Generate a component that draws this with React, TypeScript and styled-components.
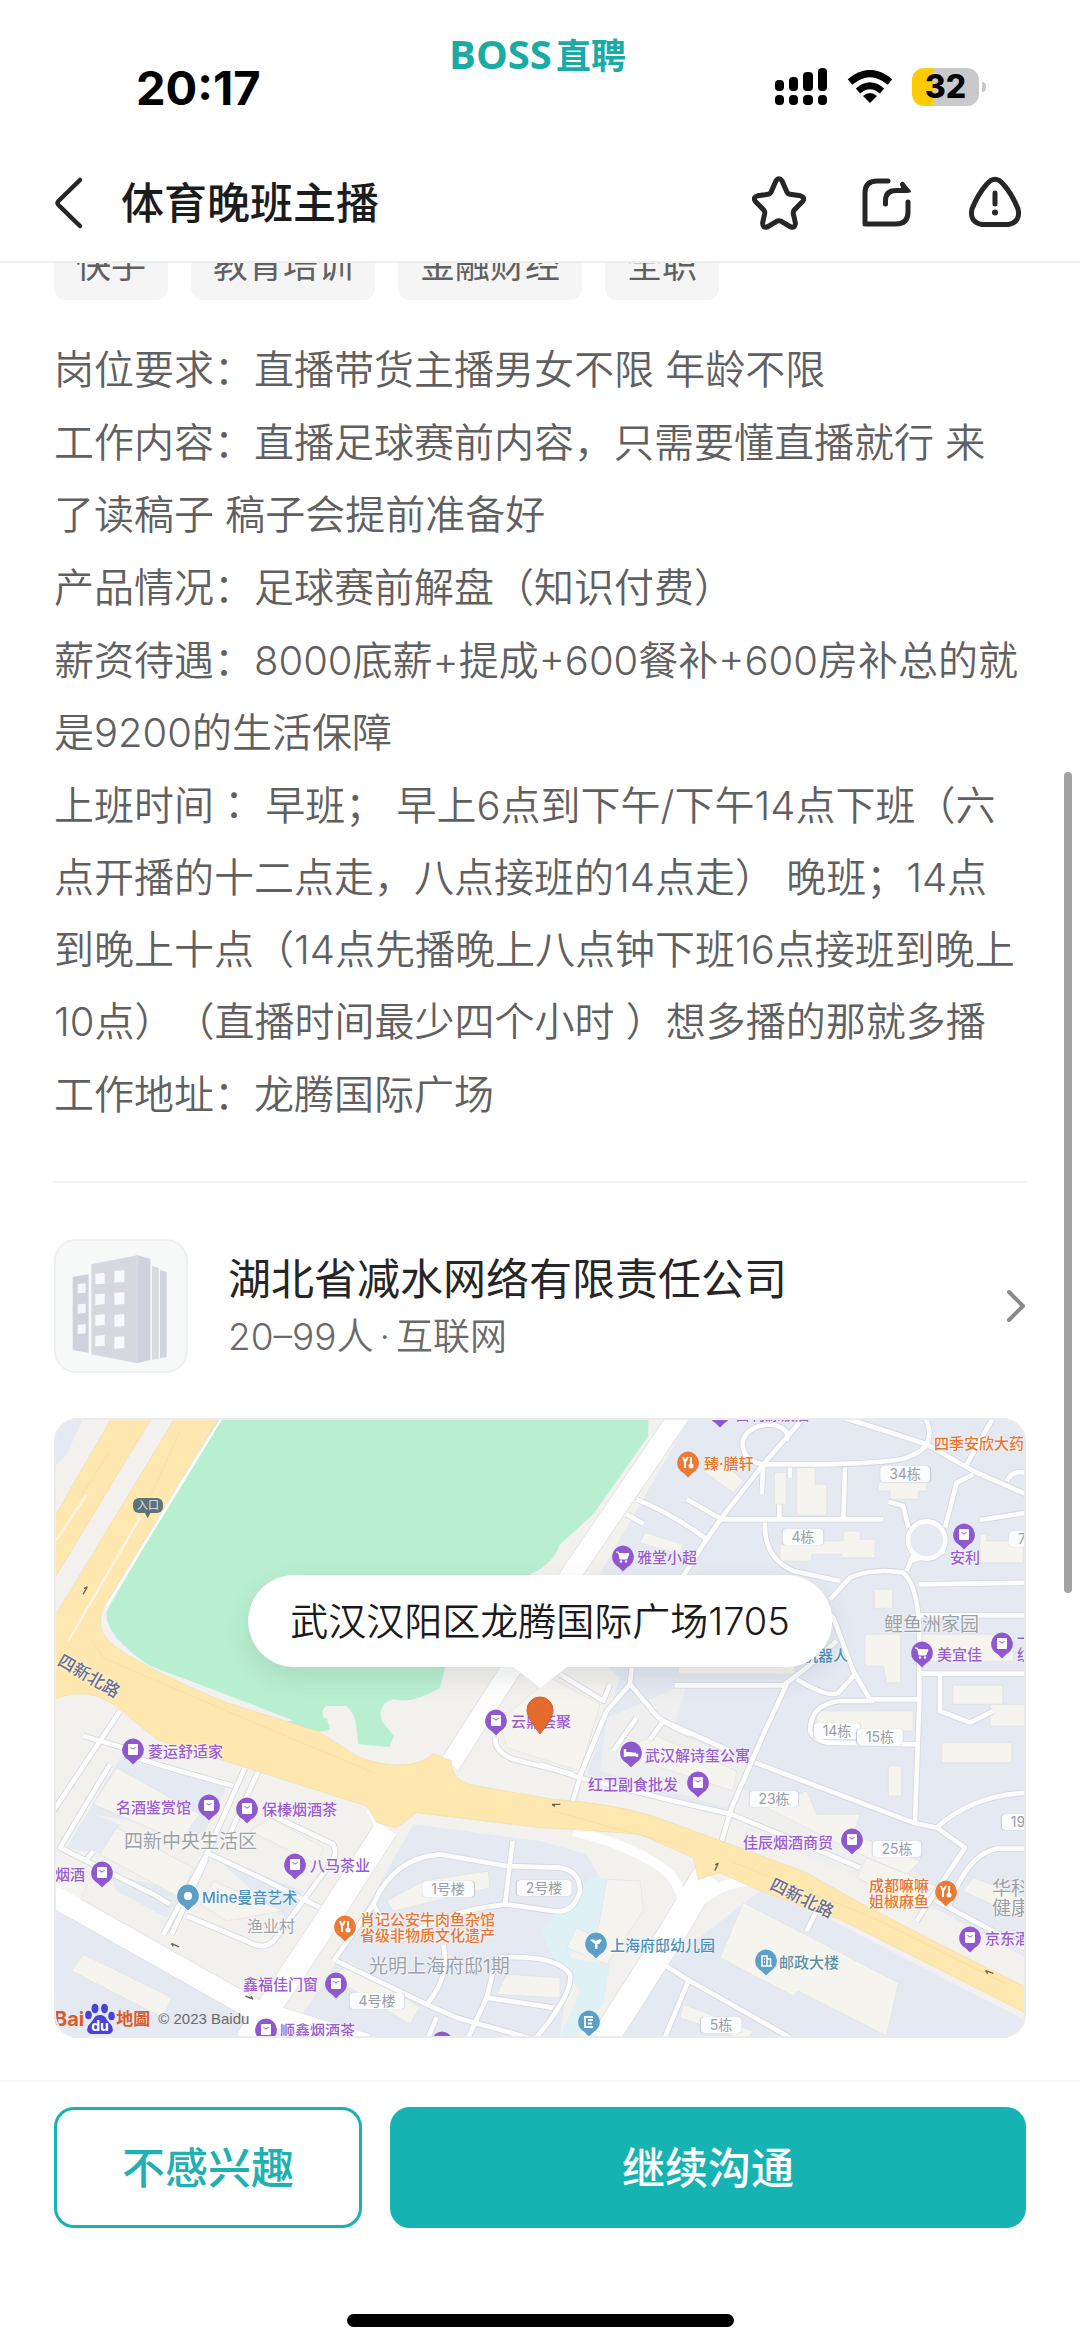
import React from "react";
import styled, { createGlobalStyle } from "styled-components";

const teal = "#17b3b3";
const ink = "#262626";
const body = "#606060";

const GlobalStyle = createGlobalStyle`
  body {
    margin: 0;
    background: #fff;
    color: ${ink};
    font-family: Inter, "Noto Sans CJK SC", sans-serif;
    text-spacing-trim: space-all;
  }
  *, *::before, *::after { box-sizing: border-box; }
  h1, h2, p, ul { margin: 0; padding: 0; font-weight: 400; }
  button { font-family: inherit; cursor: pointer; }
`;

const Page = styled.div`
  position: relative;
  display: flex;
  flex-direction: column;
  min-height: 100vh;
  overflow: hidden;
`;

const StatusBar = styled.div`
  display: grid;
  grid-template-columns: 1fr auto 1fr;
  align-items: start;
  height: 144px;
  padding: 0 94px 0 136px;
  color: #000;
`;

const Clock = styled.time`
  padding-top: 60px;
  font-size: 47px;
  line-height: 56px;
  font-weight: 700;
`;

const Brand = styled.div`
  display: flex;
  align-items: center;
  gap: 4px;
  margin-left: -47px;
  padding-top: 30px;
  color: #1aaba6;
  font: 700 35px/48px "Noto Sans CJK SC", sans-serif;
`;

const BrandLatin = styled.span`
  font: 700 40px/48px "Open Sans", sans-serif;
`;

const StatusIcons = styled.div`
  display: flex;
  justify-content: flex-end;
  align-items: center;
  gap: 19px;
  padding-top: 68px;
`;

const Battery = styled.div`
  display: flex;
  align-items: center;
  gap: 3px;

  &::after {
    content: "";
    width: 4px;
    height: 10px;
    border-radius: 0 5px 5px 0;
    background: #c9c9c9;
  }
`;

const BatteryLevel = styled.span<{ $level: number }>`
  width: 67px;
  height: 38px;
  border-radius: 12px;
  background: linear-gradient(to right, #ffcb05 ${(p) => p.$level}%, #c9c9c9 ${(p) => p.$level}%);
  font-size: 32px;
  line-height: 38px;
  font-weight: 800;
  text-align: center;
`;

const NavBar = styled.header`
  display: flex;
  align-items: center;
  height: 119px;
  padding: 0 58px 0 54px;
  border-bottom: 2px solid #efefef;
`;

const Title = styled.h1`
  flex: 1;
  margin-left: 36px;
  color: #1c1c1c;
  font-size: 43px;
  line-height: 60px;
  font-weight: 500;
`;

const IconButton = styled.button`
  display: flex;
  padding: 0;
  border: 0;
  background: none;
  color: ${ink};
`;

const Actions = styled.div`
  display: flex;
  gap: 54px;
`;

const Content = styled.main`
  display: flex;
  flex-direction: column;
  padding: 0 54px;
`;

const TagRow = styled.ul`
  display: flex;
  align-items: flex-end;
  gap: 23px;
  height: 37px;
  overflow: hidden;
  list-style: none;
`;

const Tag = styled.li`
  padding: 0 22px;
  border-radius: 12px;
  background: #f5f5f5;
  color: ${body};
  font-size: 35px;
  line-height: 70px;
`;

const Description = styled.section`
  display: flex;
  flex-direction: column;
  gap: 1px;
  margin-top: 34px;
  color: ${body};
  font-size: 40px;
  line-height: 72px;
`;

const Paragraph = styled.p`
  font-weight: 350;
  white-space: pre;
`;

const MidColon = styled.span`
  font-family: "Noto Sans CJK TC", sans-serif;
  line-height: 1;
`;

const Company = styled.a`
  display: flex;
  align-items: center;
  margin-top: 50px;
  padding: 56px 0 45px;
  border-top: 2px solid #f3f3f3;
  color: inherit;
  text-decoration: none;
`;

const CompanyLogo = styled.span`
  display: flex;
  width: 134px;
  height: 134px;
  border: 2px solid #efefef;
  border-radius: 22px;
  background: #f7f8f8;
`;

const CompanyText = styled.div`
  flex: 1;
  margin-left: 40px;
`;

const CompanyName = styled.h2`
  font-size: 43px;
  line-height: 62px;
`;

const CompanyMeta = styled.p`
  color: #6a6a6a;
  font-size: 37px;
  line-height: 54px;
  font-weight: 350;
`;

const Dot = styled.span`
  padding: 0 6px;
`;

const MapBox = styled.section`
  position: relative;
  height: 620px;
  border-radius: 24px;
  overflow: hidden;
  background: #f3f1ee;

  &::after {
    content: "";
    position: absolute;
    inset: 0;
    border: 2px solid #ececec;
    border-radius: 24px;
  }
`;

const MapSvg = styled.svg`
  display: block;
  width: 100%;
  height: 100%;
`;

type Tone = "purple" | "orange" | "blue" | "slate" | "gray" | "road";

const tones: Record<Tone, string> = {
  purple: "#9a5bd0",
  orange: "#e8762f",
  blue: "#4a90bd",
  slate: "#5f8ea3",
  gray: "#9aa1a6",
  road: "#6d6f86",
};

const PlaceLabel = styled.span<{ $x: number; $y: number; $tone: Tone; $size?: number; $angle?: number }>`
  position: absolute;
  left: ${(p) => p.$x}px;
  top: ${(p) => p.$y}px;
  transform: translateY(-50%) rotate(${(p) => p.$angle ?? 0}deg);
  color: ${(p) => tones[p.$tone]};
  font-size: ${(p) => p.$size ?? 15}px;
  line-height: ${(p) => ((p.$size ?? 15) > 17 ? 20 : 16)}px;
  font-weight: ${(p) => (p.$tone === "gray" ? 400 : 500)};
  white-space: pre;
  text-shadow: 0 0 2px #fff, 0 0 2px #fff;
`;

const HouseNumber = styled.span<{ $x: number; $y: number }>`
  position: absolute;
  left: ${(p) => p.$x}px;
  top: ${(p) => p.$y}px;
  transform: translate(-50%, -50%);
  padding: 0 9px;
  border-radius: 4px;
  background: #fbfcfd;
  box-shadow: 0 0 1px #b9bec8;
  color: #9a9fa6;
  font-size: 14px;
  line-height: 16px;
  white-space: nowrap;
`;

const PinSvg = styled.svg<{ $x: number; $y: number }>`
  position: absolute;
  left: ${(p) => p.$x - 12}px;
  top: ${(p) => p.$y - 12}px;
`;

const EntranceSign = styled.span`
  position: absolute;
  left: 79px;
  top: 80px;
  padding: 0 4px;
  border-radius: 6px;
  background: #5d7377;
  color: #dfe8e8;
  font-size: 11px;
  line-height: 15px;
`;

const Callout = styled.div`
  position: absolute;
  left: 50%;
  top: 157px;
  transform: translateX(-50%);
  padding: 0 42px;
  border-radius: 46px;
  background: #fff;
  box-shadow: 0 10px 24px rgba(60, 70, 80, 0.12);
  color: #1a1a1a;
  font-size: 38px;
  line-height: 92px;
  font-weight: 350;
  white-space: nowrap;

  &::after {
    content: "";
    position: absolute;
    left: 50%;
    top: 100%;
    margin: -1px 0 0 -28px;
    border: solid transparent;
    border-width: 22px 28px 0;
    border-top-color: #fff;
  }
`;

const SelectedPin = styled.svg`
  position: absolute;
  left: 472px;
  top: 278px;
`;

const MapCredit = styled.div`
  position: absolute;
  left: 0;
  bottom: 3px;
  display: flex;
  align-items: center;
  color: #dd5a28;
  font-size: 17px;
  line-height: 20px;
  font-weight: 700;
`;

const BaiMark = styled.span`
  font-size: 20px;
`;

const Copyright = styled.small`
  margin-left: 8px;
  color: #6a6a6a;
  font: 500 15px/20px "Liberation Sans", sans-serif;
`;

const ScrollThumb = styled.div`
  position: absolute;
  right: 8px;
  top: 772px;
  width: 8px;
  height: 821px;
  border-radius: 4px;
  background: #a3a3a3;
`;

const BottomBar = styled.footer`
  display: grid;
  grid-template-columns: 308fr 636fr;
  gap: 28px;
  margin-top: 42px;
  padding: 25px 54px 0;
  border-top: 2px solid #f6f6f6;
`;

const BarButton = styled.button<{ $filled?: boolean }>`
  height: 121px;
  padding: 0;
  border: 3px solid ${teal};
  border-radius: 20px;
  background: ${(p) => (p.$filled ? teal : "#fff")};
  color: ${(p) => (p.$filled ? "#fff" : "#1fb0b1")};
  font-size: 43px;
  line-height: 60px;
  font-weight: 500;
`;

const HomeIndicator = styled.div`
  align-self: center;
  width: 387px;
  height: 13px;
  margin: 86px 0 22px;
  border-radius: 7px;
  background: #000;
`;

const SignalIcon = () => (
  <svg width="53" height="38" viewBox="0 0 53 38" aria-hidden="true">
    <rect x="0" y="12" width="9" height="11" rx="4" />
    <rect x="14" y="9" width="9" height="14" rx="4" />
    <rect x="28" y="4" width="10" height="19" rx="4" />
    <rect x="43" y="0" width="9" height="23" rx="4" />
    <rect x="0" y="27" width="9" height="10" rx="4" />
    <rect x="14" y="27" width="9" height="10" rx="4" />
    <rect x="28" y="27" width="10" height="10" rx="4" />
    <rect x="43" y="27" width="9" height="10" rx="4" />
  </svg>
);

const WifiIcon = () => (
  <svg width="46" height="34" viewBox="0 0 46 34" aria-hidden="true">
    <path d="M3 12 Q23 -5 43 12" fill="none" stroke="#000" strokeWidth="7" />
    <path d="M11 21 Q23 10.500 35 21" fill="none" stroke="#000" strokeWidth="6.500" />
    <path d="M16 26 Q23 20 30 26 L23 33 Z" />
  </svg>
);

const BackIcon = () => (
  <svg width="31" height="54" viewBox="0 0 31 54" fill="none" stroke="currentColor" strokeWidth="4.500" strokeLinecap="round" strokeLinejoin="round">
    <path d="M26 4 L4.500 25 Q2.500 27 4.500 29 L26 50" />
  </svg>
);

const StarIcon = () => (
  <svg width="54" height="54" viewBox="0 0 54 54" fill="none" stroke="currentColor" strokeWidth="5" strokeLinejoin="round">
    <path d="M23.800 5.200 Q27 0.500 30.200 5.200 L35 16.200 Q36 18 38 18.300 L48.500 19.800 Q53.500 21.300 50.800 25.200 L42 34.300 Q41 35.800 41.300 37.500 L43.400 47 Q43.500 52 38.800 51 L29.300 45.300 Q27 44.300 24.700 45.300 L15.200 51 Q10.500 52 10.600 47 L12.700 37.500 Q13 35.800 12 34.300 L3.200 25.200 Q0.500 21.300 5.500 19.800 L16 18.300 Q18 18 19 16.200 Z" />
  </svg>
);

const ShareIcon = () => (
  <svg width="54" height="54" viewBox="0 0 54 54" fill="none" stroke="currentColor" strokeWidth="5" strokeLinecap="round" strokeLinejoin="round">
    <path d="M28 5 H17 Q5 5 5 17 V48 H36 Q48 48 48 36 V26" />
    <path d="M25.500 28 V25 Q25.500 14.500 36 14.500 H47 L42.500 8.500" />
    <path d="M42 7 L50 15.500 H42 Z" fill="currentColor" strokeWidth="2" />
  </svg>
);

const WarnIcon = () => (
  <svg width="54" height="54" viewBox="0 0 54 54" fill="none" stroke="currentColor" strokeWidth="5" strokeLinecap="round" strokeLinejoin="round">
    <path d="M18.500 8.500 Q27 -2 35.500 8.500 Q44 18 50 33 Q53 46 40 48.500 H14 Q1 46 4 33 Q10 18 18.500 8.500 Z" />
    <path d="M27 17 V28" />
    <circle cx="27" cy="36.500" r="3" fill="currentColor" stroke="none" />
  </svg>
);

const ChevronIcon = () => (
  <svg width="20" height="34" viewBox="0 0 20 34" fill="none" stroke="#8a8a8a" strokeWidth="4" strokeLinecap="round" strokeLinejoin="round">
    <path d="M3 3 L17 17 L3 31" />
  </svg>
);

const windowRows = [0, 1, 2, 3];

const BuildingIcon = () => (
  <svg width="130" height="130" viewBox="44 59 390 390" aria-hidden="true">
    <path d="M94 166 L142 159 V395 L94 386 Z" fill="#cfd2dc" />
    <path d="M356 146 L376 152 V407 L356 411 Z" fill="#d0d4de" />
    <path d="M332 134 L352 139 V412 L332 415 Z" fill="#d8dbe0" />
    <path d="M150 129 L288 102 V426 L150 399 Z" fill="#d5d9df" />
    <path d="M288 102 L327 112 V416 L288 426 Z" fill="#ced2dd" />
    {windowRows.map((r) => (
      <path key={r} fill="#f7f9fc" d={`M162 ${157 + r * 62} l28 -2 v32 l-28 2 z M219 ${149 + r * 66} l30 -3 v36 l-30 2 z`} />
    ))}
    {[0, 1, 2].map((r) => (
      <path key={r} fill="#f4f6fa" d={`M109 ${188 + r * 61} l24 -2 v28 l-24 2 z`} />
    ))}
  </svg>
);

const lanes = [
  "M2300 10 L2170 160 L2045 320 L2000 385 L1920 510",
  "M2240 90 C2260 30 2130 20 2108 90 Q2105 150 2170 160 M2170 160 L2165 250",
  "M2170 160 H2360 Q2560 155 2600 140 Q2650 120 2660 100",
  "M2410 20 Q2540 60 2660 100 L2800 180 L2970 255 M2650 10 Q2680 60 2660 100 M2865 10 L2780 160",
  "M2415 170 L2410 330 M2218 280 V330 M2250 170 V200",
  "M1940 265 L2045 325 H2530 M1790 265 Q1900 310 2000 385 M1760 310 L1810 338",
  "M2175 335 Q2170 440 2260 480 L2400 510",
  "M2370 565 L2430 500 Q2500 470 2590 485 Q2640 530 2638 700 V870 L2625 1230",
  "M2600 480 L2620 430 M2605 350 L2590 285 L2545 272 M2715 350 L2750 215 L2800 190 M2715 420 L2610 450",
  "M2635 520 L2970 515 M2640 613 H2960 M2640 788 H2970 M2820 327 L2960 305 M2900 210 Q2920 170 2970 190",
  "M2350 590 L2380 620 L2440 780 L2490 865 H2635",
  "M1905 823 H2230 L2300 770 L2390 690 M2270 805 Q2380 870 2400 840 L2445 790 M2240 820 L2170 970 L2075 1190 L2045 1290",
  "M2500 870 H2400 Q2310 880 2310 960 Q2320 985 2360 995 L2635 1000",
  "M2145 1055 L2620 1235 L2690 1250 L2775 1310 L2695 1430 L2630 1530 M2690 1250 Q2800 1150 2970 1145",
  "M2725 1490 Q2780 1330 2870 1313 H2970 M2690 1470 L2970 1620",
  "M1500 1060 L1620 1100 L1900 1170 L2075 1210 L2460 1370 M1620 1100 L1595 1180",
  "M1620 1095 L1700 900 L1770 820 L1775 770 M1560 790 L1690 870 L1710 820 M1770 820 L1830 890 Q1850 930 1950 970",
  "M1720 1020 L1790 920 M1830 985 L1870 930 L2070 1020",
  "M2700 790 V900 L2790 935 M2860 900 L2790 935",
  "M250 1030 L420 1080 L580 1125 M615 1070 L500 1330 L370 1570 M655 1080 L560 1290",
  "M210 1060 L60 1310 L340 1450 L390 1480 M40 1200 L240 900 M130 975 L250 1010 M160 1320 L140 1345",
  "M690 1210 L880 1300 Q895 1330 870 1360 L700 1590 Q670 1620 620 1590 L440 1515",
  "M500 1325 L660 1400 L840 1490 M395 1570 L500 1340",
  "M880 1650 L1000 1480 Q1060 1340 1200 1330 L1400 1365 L1560 1370 Q1620 1380 1620 1440 Q1600 1510 1540 1500 L1400 1480 Q1200 1500 1080 1590",
  "M1418 1290 L1395 1480 M1000 1480 L1050 1570",
  "M890 1650 L1160 1780 L1250 1820 L1500 1890 M1160 1780 Q1230 1700 1210 1600 M1190 1820 L1160 1890",
  "M1370 1640 Q1550 1630 1590 1690 Q1600 1750 1480 1890 M1370 1640 L1340 1760 L1540 1790 M1340 1760 L1280 1890",
  "M1870 1660 L1950 1710 L2250 1880 M1945 1710 L1870 1890 M2330 1500 L2300 1560",
  "M1367 980 Q1360 1020 1420 1045 L1600 1090",
];

const buildings = [
  "M2203 185 h36 v95 h-36 z",
  "M2270 170 h55 v50 h35 v93 h-90 z",
  "M2515 215 h145 v25 h-25 v25 h-85 v-25 h-35 z",
  "M2220 400 h100 v-10 h90 v-30 h50 v25 h45 v55 h-100 v-10 h-90 v20 h-95 z",
  "M2503 535 h55 v57 h-55 z",
  "M2475 670 h107 v145 h-42 l-10 -50 h-55 z",
  "M2738 823 h150 v57 h-150 z M2850 880 h110 v65 h-110 z",
  "M2705 995 h210 v60 h-210 z M2545 1065 h40 v90 h-40 z",
  "M1915 740 h350 v50 h-350 z M2820 370 h20 v20 h110 v65 h-130 z",
  "M2640 670 h280 v80 h-280 z",
  "M1990 180 L2060 160 L2110 210 L2080 245 Z M1815 365 L1930 400 L1920 430 L1800 395 Z",
  "M2330 900 h290 v60 h-290 z M1770 1000 L1850 975 L2090 1080 L2080 1140 L1770 1040 Z",
  "M2180 1190 L2300 1140 L2330 1210 L2460 1210 L2440 1270 L2640 1350 L2600 1390 L2440 1320 Z",
  "M2110 1475 L2575 1715 L2540 1875 L2275 1740 L2260 1755 L2040 1640 Z",
  "M2480 1340 L2700 1430 L2660 1500 L2450 1400 Z M2800 1400 L2960 1460 V1530 L2770 1440 Z",
  "M230 1070 L480 1210 L420 1290 L160 1180 Z",
  "M230 1250 L460 1370 L420 1460 L180 1330 Z M45 1370 L140 1420 L120 1470 L45 1440 Z",
  "M690 1220 L850 1310 L830 1360 L630 1260 Z M520 1410 L730 1500 L560 1530 L480 1480 Z",
  "M130 1630 L395 1760 L370 1820 L95 1680 Z",
  "M930 1650 L1140 1790 L1110 1840 L880 1700 Z",
  "M1150 1410 L1345 1380 L1350 1430 L1060 1500 L1040 1470 Z M1400 1690 L1560 1700 V1760 L1370 1750 Z",
  "M1700 1405 L1800 1410 L1810 1500 L1700 1660 L1580 1610 L1610 1550 L1670 1580 Z",
  "M1930 1780 L2140 1860 L2120 1890 L1920 1820 Z M1530 800 L1680 880 L1620 1080 L1400 1010 L1380 930 Z",
];

const arrows: Array<[number, number, number]> = [
  [136, 538, -60],
  [405, 1602, 205],
  [628, 1760, 20],
  [1548, 1180, 180],
  [2030, 1367, -65],
  [2848, 1683, 200],
];

const MapCanvas = () => (
  <MapSvg viewBox="42 21 2916 1860" preserveAspectRatio="xMidYMid slice" aria-hidden="true">
    <path d="M42 21 H2958 V1881 H42 Z" fill="#f3f1ee" />
    <g fill="#e4e9f2">
      <path d="M42 21 H130 L80 130 L42 170 Z" />
      <path d="M1950 21 H2958 V1640 L2700 1500 L2400 1350 L2080 1210 L1640 1090 L1740 800 L1580 660 Z" />
      <path d="M1120 1240 L1500 1290 L1640 1330 L1690 1420 L1600 1560 L1560 1881 H740 L860 1700 Z" />
      <path d="M42 1500 L600 1760 L660 1830 L740 1881 H42 Z" />
      <path d="M2160 1440 L2360 1520 L2958 1830 V1881 H1720 L1900 1640 Z" />
      <path d="M240 1040 L560 1130 L490 1270 L160 1210 L240 1240 L190 1330 L80 1310 Z" />
      <path d="M210 1390 L430 1440 L380 1520 L230 1440 Z M530 1340 L790 1440 L740 1520 L700 1500 Z" />
    </g>
    <path d="M1650 1400 H1700 L1670 1570 L1620 1600 L1580 1640 L1710 1660 L1690 1780 L1600 1881 H1560 L1620 1740 L1540 1640 L1500 1560 Z" fill="#def1f5" />
    <path d="M1940 820 L1700 920 L1680 1080 L2060 1190 L2130 1060 L1900 960 Z M2100 1130 L2640 1390 L2560 1450 L2060 1230 Z" fill="#efeff0" />
    <path d="M537 21 L200 600 Q190 670 330 765 Q560 850 820 952 L870 945 Q830 905 860 885 L920 885 Q945 910 950 950 L955 1000 L1048 1008 L1062 975 L1025 930 Q1010 880 1060 865 Q1120 880 1200 830 L1215 770 L1350 650 L1470 490 Q1540 460 1560 400 L1660 310 L1825 75 V21 Z" fill="#b8efd0" />
    <path d="M740 930 Q830 975 870 955 L860 920 Z" fill="#b8efd0" />
    <g fill="none" stroke="#dddde0">
      <path d="M1920 10 L1600 480 L1230 1060" strokeWidth="64" />
      <path d="M1040 1250 L840 1560 L620 1890" strokeWidth="76" />
      <path d="M30 1450 L650 1800 L980 1900" strokeWidth="68" />
      <path d="M2000 1390 L1900 1560 L1690 1890" strokeWidth="86" />
    </g>
    <g fill="#f6f4ef" stroke="#e3e1e0" strokeWidth="2">
      {buildings.map((d) => (
        <path key={d} d={d} />
      ))}
    </g>
    <g fill="none" strokeLinejoin="round">
      <g stroke="#d3d7df" strokeWidth="19">
        {lanes.map((d) => (
          <path key={d} d={d} />
        ))}
        <circle cx="2660" cy="387" r="56" />
      </g>
      <g stroke="#fdfdfe" strokeWidth="14">
        {lanes.map((d) => (
          <path key={d} d={d} />
        ))}
        <circle cx="2660" cy="387" r="56" fill="#e4e9f2" />
      </g>
      <g stroke="#fefefe">
        <path d="M1920 10 L1600 480 L1230 1060" strokeWidth="60" />
        <path d="M1040 1250 L840 1560 L620 1890" strokeWidth="72" />
        <path d="M30 1450 L650 1800 L980 1900" strokeWidth="64" />
        <path d="M2000 1390 L1900 1560 L1690 1890" strokeWidth="82" />
        <path d="M1600 1260 Q1800 1310 1890 1390 Q1930 1440 1930 1500" strokeWidth="30" />
        <path d="M2120 1410 Q2000 1420 1920 1540 M990 1190 Q1030 1230 1010 1290" strokeWidth="32" />
        <path d="M1440 770 L1250 1060" strokeWidth="12" />
      </g>
    </g>
    <g fill="#ffe8b0" stroke="#ecdcae" strokeWidth="2">
      <path d="M215 21 H335 L42 505 V320 Z" />
      <path d="M405 21 H535 L190 590 Q160 660 230 710 Q330 780 560 875 L830 960 L960 1040 Q1110 1090 1180 1028 L1235 1050 Q1230 1110 1310 1125 L1540 1165 Q1750 1180 1880 1230 L2030 1285 L2300 1385 L2450 1470 L2700 1600 L2965 1732 V1810 L2400 1525 L2320 1500 L2140 1430 L2040 1385 L1975 1405 L1960 1340 L1800 1270 L1600 1255 L1500 1250 L1130 1205 L1070 1250 L1010 1235 L980 1185 L650 1080 L350 985 L240 895 Q150 820 42 865 V620 Z" />
    </g>
    <path d="M140 250 L50 385 M300 320 L85 690" fill="none" stroke="#faf3ea" strokeWidth="7" />
    <path d="M545 21 L200 585" fill="none" stroke="#fff" strokeWidth="7" />
    <path d="M150 680 L190 740 L560 900 L1000 1085 M420 60 L330 260 M210 120 L120 260 M2070 1350 L2500 1520 L2900 1720 M1540 1200 L1900 1300" fill="none" stroke="#f6d9a0" strokeWidth="2" />
    <g fill="none" stroke="#6b6253" strokeWidth="4">
      {arrows.map(([x, y, a]) => (
        <path key={`${x}-${y}`} transform={`translate(${x} ${y}) rotate(${a})`} d="M-13 0 H12 M3 -6 L12 0" />
      ))}
    </g>
    <path d="M314 304 H332 L323 322 Z" fill="#6b6a62" />
  </MapSvg>
);

type Glyph = "bag" | "cart" | "bed" | "food" | "dot" | "kid" | "tower" | "door";

const pinFill: Record<Glyph, string> = {
  bag: "#9058cf",
  cart: "#9058cf",
  bed: "#9058cf",
  food: "#ec7a35",
  dot: "#5c9fc9",
  kid: "#5c9fc9",
  tower: "#5c9fc9",
  door: "#5c9fc9",
};

const glyphs: Record<Glyph, React.ReactNode> = {
  bag: (
    <>
      <rect x="7" y="6" width="10" height="11" rx="1" fill="#fff" />
      <path d="M9.500 9 Q12 13 14.500 9" fill="none" stroke="#9058cf" strokeWidth="1" />
    </>
  ),
  cart: (
    <>
      <path d="M5 7 H7.500 L9 14 H16 L18 8.500 H8" fill="#fff" stroke="#fff" strokeWidth="1" />
      <circle cx="10" cy="16.500" r="1.200" fill="#fff" />
      <circle cx="15" cy="16.500" r="1.200" fill="#fff" />
    </>
  ),
  bed: <path d="M6 8 V16 M6 14 H18 V16 M7 12 L17 13" fill="none" stroke="#fff" strokeWidth="2.500" />,
  food: (
    <>
      <path d="M7 6 L9 11 L12 6 M9 10 V17" fill="none" stroke="#fff" strokeWidth="2" />
      <path d="M15 6 V13" stroke="#fff" strokeWidth="2" />
      <circle cx="15" cy="15" r="2.500" fill="#fff" />
    </>
  ),
  dot: <circle cx="12" cy="12" r="4" fill="#fff" />,
  kid: <path d="M6 8 Q9 6 12 9 Q15 6 18 8 L15 12 H13.500 V17 H11 V12 Z" fill="#fff" />,
  tower: <path d="M8 17 V7 H13 V17 M13 10 H16.500 V17 M7 17 H18 M10 10 H11 M10 13 H11" fill="none" stroke="#fff" strokeWidth="1.500" />,
  door: <path d="M16 7 H8 V17 H16 M11 10 H16 M11 13.500 H15" fill="none" stroke="#fff" strokeWidth="1.800" />,
};

const Pin = ({ x, y, glyph }: { x: number; y: number; glyph: Glyph }) => (
  <PinSvg $x={x} $y={y} width="24" height="27" viewBox="0 0 24 27" aria-hidden="true">
    <path d="M12 0.500 A11.500 11.500 0 0 1 16 22.500 L12 26.500 L8 22.500 A11.500 11.500 0 0 1 12 0.500 Z" fill={pinFill[glyph]} />
    {glyphs[glyph]}
  </PinSvg>
);

const pins: Array<[number, number, Glyph]> = [
  [79, 332, "bag"],
  [155, 388, "bag"],
  [193, 391, "bag"],
  [241, 447, "bag"],
  [48, 455, "bag"],
  [282, 566, "bag"],
  [212, 612, "bag"],
  [388, 625, "bag"],
  [442, 303, "bag"],
  [666, -5, "bag"],
  [569, 139, "cart"],
  [910, 117, "bag"],
  [868, 235, "cart"],
  [948, 226, "bag"],
  [577, 335, "bed"],
  [644, 365, "bag"],
  [798, 422, "bag"],
  [916, 520, "bag"],
  [634, 45, "food"],
  [291, 509, "food"],
  [892, 474, "food"],
  [134, 478, "dot"],
  [542, 526, "kid"],
  [712, 543, "tower"],
  [535, 604, "door"],
];

const labels: Array<{ text: string; x: number; y: number; tone: Tone; size?: number; angle?: number }> = [
  { text: "菱运舒适家", x: 94, y: 334, tone: "purple" },
  { text: "名酒鉴赏馆", x: 62, y: 390, tone: "purple" },
  { text: "保榛烟酒茶", x: 208, y: 392, tone: "purple" },
  { text: "八马茶业", x: 256, y: 448, tone: "purple" },
  { text: "烟酒", x: 1, y: 457, tone: "purple" },
  { text: "鑫福佳门窗", x: 189, y: 567, tone: "purple" },
  { text: "顺鑫烟酒茶", x: 226, y: 613, tone: "purple" },
  { text: "云鼎荟聚", x: 457, y: 304, tone: "purple" },
  { text: "富利源饭店", x: 681, y: -3, tone: "purple" },
  { text: "雅堂小超", x: 583, y: 140, tone: "purple" },
  { text: "安利", x: 896, y: 140, tone: "purple" },
  { text: "美宜佳", x: 883, y: 237, tone: "purple" },
  { text: "一\n纺", x: 963, y: 229, tone: "purple" },
  { text: "武汉解诗玺公寓", x: 591, y: 338, tone: "purple" },
  { text: "红卫副食批发", x: 534, y: 367, tone: "purple" },
  { text: "佳辰烟酒商贸", x: 689, y: 425, tone: "purple" },
  { text: "京东酒", x: 931, y: 521, tone: "purple" },
  { text: "臻·膳轩", x: 650, y: 46, tone: "orange" },
  { text: "四季安欣大药", x: 880, y: 26, tone: "orange" },
  { text: "肖记公安牛肉鱼杂馆\n省级非物质文化遗产", x: 306, y: 510, tone: "orange" },
  { text: "成都嘛嘛\n姐椒麻鱼", x: 815, y: 476, tone: "orange" },
  { text: "Mine曼音艺术", x: 148, y: 480, tone: "blue" },
  { text: "上海府邸幼儿园", x: 556, y: 528, tone: "blue" },
  { text: "邮政大楼", x: 725, y: 545, tone: "slate" },
  { text: "机器人", x: 749, y: 238, tone: "blue" },
  { text: "四新中央生活区", x: 70, y: 424, tone: "gray", size: 19 },
  { text: "渔业村", x: 193, y: 508, tone: "gray", size: 16 },
  { text: "光明上海府邸1期", x: 315, y: 549, tone: "gray", size: 19 },
  { text: "鲤鱼洲家园", x: 830, y: 207, tone: "gray", size: 19 },
  { text: "华科\n健康", x: 938, y: 481, tone: "gray", size: 19 },
  { text: "四新北路", x: 1, y: 258, tone: "road", size: 17, angle: 30 },
  { text: "四新北路", x: 714, y: 480, tone: "road", size: 17, angle: 26 },
];

const houses: Array<[string, number, number]> = [
  ["34栋", 851, 56],
  ["4栋", 749, 119],
  ["7", 968, 121],
  ["14栋", 783, 313],
  ["15栋", 826, 319],
  ["23栋", 720, 381],
  ["25栋", 843, 431],
  ["19栋", 971, 404],
  ["5栋", 667, 607],
  ["1号楼", 394, 471],
  ["2号楼", 490, 470],
  ["4号楼", 323, 583],
];

const PawLogo = () => (
  <svg width="32" height="32" viewBox="0 0 32 32" aria-hidden="true">
    <g fill="#4a42d4">
      <ellipse cx="4.500" cy="12" rx="3.300" ry="4.300" />
      <ellipse cx="11" cy="5.500" rx="3.500" ry="4.800" />
      <ellipse cx="20.500" cy="5.500" rx="3.500" ry="4.800" />
      <ellipse cx="27.500" cy="13" rx="3.300" ry="4.300" />
      <path d="M16 12 Q21 12 23 17 L28 23 Q31 31 23 31 H9 Q1 31 4 23 L9 17 Q11 12 16 12 Z" />
    </g>
    <text x="16" y="28" textAnchor="middle" fill="#fff" fontSize="14" fontWeight="700">
      du
    </text>
  </svg>
);

const tags = ["快手", "教育培训", "金融财经", "全职"];

export default function App() {
  return (
    <>
      <GlobalStyle />
      <Page>
        <StatusBar>
          <Clock>20:17</Clock>
          <Brand>
            <BrandLatin>BOSS</BrandLatin>
            直聘
          </Brand>
          <StatusIcons>
            <SignalIcon />
            <WifiIcon />
            <Battery>
              <BatteryLevel $level={32}>32</BatteryLevel>
            </Battery>
          </StatusIcons>
        </StatusBar>

        <NavBar>
          <IconButton aria-label="返回">
            <BackIcon />
          </IconButton>
          <Title>体育晚班主播</Title>
          <Actions>
            <IconButton aria-label="收藏">
              <StarIcon />
            </IconButton>
            <IconButton aria-label="分享">
              <ShareIcon />
            </IconButton>
            <IconButton aria-label="举报">
              <WarnIcon />
            </IconButton>
          </Actions>
        </NavBar>

        <Content>
          <TagRow>
            {tags.map((t) => (
              <Tag key={t}>{t}</Tag>
            ))}
          </TagRow>

          <Description>
            <Paragraph>岗位要求：直播带货主播男女不限 年龄不限</Paragraph>
            <Paragraph>{"工作内容：直播足球赛前内容，只需要懂直播就行 来\n了读稿子 稿子会提前准备好"}</Paragraph>
            <Paragraph>产品情况：足球赛前解盘（知识付费）</Paragraph>
            <Paragraph>{"薪资待遇：8000底薪+提成+600餐补+600房补总的就\n是9200的生活保障"}</Paragraph>
            <Paragraph>
              上班时间
              <MidColon>：</MidColon>
              {
                " 早班； 早上6点到下午/下午14点下班（六\n点开播的十二点走，八点接班的14点走） 晚班；14点\n到晚上十点（14点先播晚上八点钟下班16点接班到晚上\n10点）（直播时间最少四个小时 ）想多播的那就多播"
              }
            </Paragraph>
            <Paragraph>工作地址：龙腾国际广场</Paragraph>
          </Description>

          <Company href="#company">
            <CompanyLogo>
              <BuildingIcon />
            </CompanyLogo>
            <CompanyText>
              <CompanyName>湖北省减水网络有限责任公司</CompanyName>
              <CompanyMeta>
                20–99人<Dot>·</Dot>互联网
              </CompanyMeta>
            </CompanyText>
            <ChevronIcon />
          </Company>

          <MapBox aria-label="工作地点">
            <MapCanvas />
            {houses.map(([text, x, y]) => (
              <HouseNumber key={text} $x={x} $y={y}>
                {text}
              </HouseNumber>
            ))}
            {labels.map((l) => (
              <PlaceLabel key={`${l.text}${l.x}`} $x={l.x} $y={l.y} $tone={l.tone} $size={l.size} $angle={l.angle}>
                {l.text}
              </PlaceLabel>
            ))}
            {pins.map(([x, y, glyph]) => (
              <Pin key={`${x}-${y}`} x={x} y={y} glyph={glyph} />
            ))}
            <EntranceSign>入口</EntranceSign>
            <MapCredit>
              <BaiMark>Bai</BaiMark>
              <PawLogo />
              <span>地圖</span>
              <Copyright>© 2023 Baidu</Copyright>
            </MapCredit>
            <SelectedPin width="28" height="39" viewBox="0 0 28 39" aria-hidden="true">
              <path d="M14 1 A13 13 0 0 1 27 14 C27 21 20 30 14 38 C8 30 1 21 1 14 A13 13 0 0 1 14 1 Z" fill="#e66a2c" stroke="#b9683a" strokeWidth="1" />
              <circle cx="14" cy="14" r="4" fill="#dc6c34" />
            </SelectedPin>
            <Callout>武汉汉阳区龙腾国际广场1705</Callout>
          </MapBox>
        </Content>

        <BottomBar>
          <BarButton>不感兴趣</BarButton>
          <BarButton $filled>继续沟通</BarButton>
        </BottomBar>
        <HomeIndicator />
        <ScrollThumb />
      </Page>
    </>
  );
}
